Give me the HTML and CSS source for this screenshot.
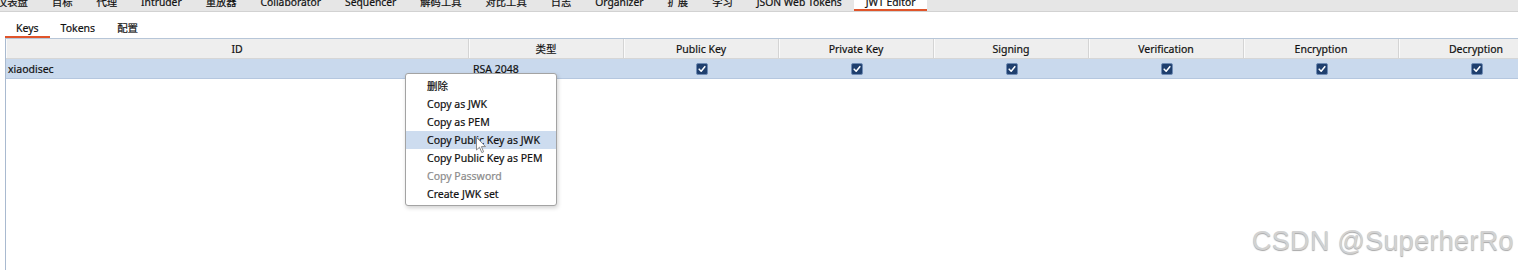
FILE: index.html
```html
<!DOCTYPE html>
<html lang="zh">
<head>
<meta charset="utf-8">
<title>JWT Editor - Keys</title>
<link rel="stylesheet" href="styles.css">
</head>
<body>
<div class="app">
  <nav class="main-tabs">
    <span class="mtab first">仪表盘</span>
    <span class="mtab">目标</span>
    <span class="mtab">代理</span>
    <span class="mtab">Intruder</span>
    <span class="mtab">重放器</span>
    <span class="mtab">Collaborator</span>
    <span class="mtab">Sequencer</span>
    <span class="mtab">解码工具</span>
    <span class="mtab">对比工具</span>
    <span class="mtab">日志</span>
    <span class="mtab">Organizer</span>
    <span class="mtab">扩展</span>
    <span class="mtab">学习</span>
    <span class="mtab">JSON Web Tokens</span>
    <span class="mtab active">JWT Editor</span>
  </nav>

  <div class="sub-tabs">
    <span class="stab active">Keys</span>
    <span class="stab">Tokens</span>
    <span class="stab">配置</span>
  </div>

  <div class="keys-table">
    <div class="trow thead">
      <div class="cell c-id">ID</div>
      <div class="cell">类型</div>
      <div class="cell">Public Key</div>
      <div class="cell">Private Key</div>
      <div class="cell">Signing</div>
      <div class="cell">Verification</div>
      <div class="cell">Encryption</div>
      <div class="cell">Decryption</div>
    </div>
    <div class="trow tdata selected">
      <div class="cell c-id">xiaodisec</div>
      <div class="cell c-type">RSA 2048</div>
      <div class="cell c-check"><span class="checkbox"><svg viewBox="0 0 12 12"><path d="M2.6 6.2 L5 8.6 L9.4 3.2" /></svg></span></div>
      <div class="cell c-check"><span class="checkbox"><svg viewBox="0 0 12 12"><path d="M2.6 6.2 L5 8.6 L9.4 3.2" /></svg></span></div>
      <div class="cell c-check"><span class="checkbox"><svg viewBox="0 0 12 12"><path d="M2.6 6.2 L5 8.6 L9.4 3.2" /></svg></span></div>
      <div class="cell c-check"><span class="checkbox"><svg viewBox="0 0 12 12"><path d="M2.6 6.2 L5 8.6 L9.4 3.2" /></svg></span></div>
      <div class="cell c-check"><span class="checkbox"><svg viewBox="0 0 12 12"><path d="M2.6 6.2 L5 8.6 L9.4 3.2" /></svg></span></div>
      <div class="cell c-check"><span class="checkbox"><svg viewBox="0 0 12 12"><path d="M2.6 6.2 L5 8.6 L9.4 3.2" /></svg></span></div>
    </div>
  </div>

  <ul class="context-menu">
    <li>删除</li>
    <li>Copy as JWK</li>
    <li>Copy as PEM</li>
    <li class="hover">Copy Public Key as JWK</li>
    <li>Copy Public Key as PEM</li>
    <li class="disabled">Copy Password</li>
    <li>Create JWK set</li>
  </ul>

  <svg class="pointer" viewBox="0 0 11 17" width="11" height="17">
    <path d="M0.5 0.5 L0.5 13 L3.5 10.2 L5.8 15.6 L7.6 14.8 L5.4 9.6 L9.5 9.6 Z" fill="#ffffff" stroke="#8a8a8a" stroke-width="1" stroke-linejoin="round"/>
  </svg>

  <div class="watermark">CSDN @SuperherRo</div>
</div>
</body>
</html>
```

FILE: styles.css
```css
* {
  box-sizing: border-box;
}

html, body {
  margin: 0;
  padding: 0;
  background: #ffffff;
}

.app {
  position: relative;
  width: 1518px;
  height: 270px;
  overflow: hidden;
  font-family: "Noto Sans", "Noto Sans CJK SC", sans-serif;
  font-size: 10.5px;
  color: #111111;
  -webkit-text-stroke: 0.2px #111111;
}

.main-tabs {
  display: flex;
  height: 12px;
  overflow: hidden;
  background: #e6e6e6;
  border-bottom: 1px solid #d2d2d2;
  white-space: nowrap;
}

.mtab {
  flex: none;
  height: 11px;
  padding: 0 12px;
  font-size: 10.3px;
  line-height: 4px;
}

.mtab.first {
  margin-left: -15px;
}

.mtab.active {
  background: #ffffff;
  border-bottom: 2px solid #e0542a;
}

/* Keys / Tokens / 配置 */
.sub-tabs {
  display: flex;
  height: 26px;
  padding-left: 5px;
}

.stab {
  flex: none;
  padding: 9px 11px 0;
  height: 26px;
  line-height: 14px;
}

.stab.active {
  border-bottom: 2px solid #e0542a;
}

/* key table */
.keys-table {
  margin-left: 5px;
  border-left: 1px solid #a9bad0;
  border-top: 1px solid #b7c6d8;
  height: 232px;
}

.trow {
  display: flex;
  white-space: nowrap;
}

.cell {
  flex: none;
  width: 155px;
}

.cell.c-id {
  width: 463px;
}

.thead {
  height: 20px;
  background: #eeeeee;
  border-bottom: 1px solid #d6d6d6;
}

.thead .cell {
  text-align: center;
  line-height: 20px;
  border-right: 1px solid #d4d4d4;
  box-shadow: inset 1px 0 0 #fafafa;
}

.tdata {
  height: 20px;
  background: #c9d9ed;
  border-bottom: 1px solid #b5c7df;
}

.tdata .cell {
  line-height: 20px;
}

.tdata .c-id {
  padding-left: 2px;
}

.tdata .c-type {
  padding-left: 4px;
}

.c-check {
  display: flex;
  align-items: center;
  justify-content: center;
}

.checkbox {
  display: block;
  width: 12px;
  height: 12px;
  border-radius: 2px;
  background: #1f3f6e;
  border: 1px solid #6e8bb5;
}

.checkbox svg {
  display: block;
  width: 10px;
  height: 10px;
}

.checkbox path {
  fill: none;
  stroke: #ffffff;
  stroke-width: 1.8;
  stroke-linecap: round;
  stroke-linejoin: round;
}

/* right-click popup over the table */
.context-menu {
  position: absolute;
  left: 405px;
  top: 73px;
  width: 152px;
  margin: 0;
  padding: 3px 0 2px;
  list-style: none;
  background: #ffffff;
  border: 1px solid #a3a3a3;
  border-radius: 3px;
  box-shadow: 1px 2px 4px rgba(0, 0, 0, 0.18);
}

.context-menu li {
  height: 18px;
  line-height: 18px;
  padding-left: 21px;
  white-space: nowrap;
}

.context-menu li.hover {
  background: #cddcef;
}

.context-menu li.disabled {
  color: #8c8c8c;
  -webkit-text-stroke: 0.2px #8c8c8c;
}

.pointer {
  position: absolute;
  left: 476px;
  top: 137px;
}

.watermark {
  position: absolute;
  left: 1252px;
  top: 226px;
  font-family: "Liberation Sans", Arial, sans-serif;
  font-size: 27px;
  letter-spacing: 0.3px;
  color: #d2d2d2;
  -webkit-text-stroke: 0;
  text-shadow: 0 1px 1px #a8a8a8;
  white-space: nowrap;
}
```
